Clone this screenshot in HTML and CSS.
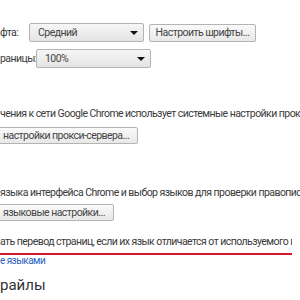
FILE: index.html
```html
<!doctype html>
<html lang="ru">
<head>
    <meta charset="utf-8">
    <title>Настройки</title>
    <link rel="stylesheet" href="styles.css">
</head>
<body>
    <div class="page">
        <!-- Шрифты -->
        <div class="row row-font">
            <span class="label">фта:</span>
            <div class="select">Средний<span class="arrow"></span></div>
            <button class="button button-fonts">Настроить шрифты...</button>
        </div>
        <div class="row row-zoom">
            <span class="label">раницы:</span>
            <div class="select">100%<span class="arrow"></span></div>
        </div>

        <!-- Сеть -->
        <p class="text text-proxy">чения к сети Google Chrome использует системные настройки прокси</p>
        <button class="button button-cut">настройки прокси-сервера...</button>

        <!-- Языки -->
        <p class="text text-lang">языка интерфейса Chrome и выбор языков для проверки правописания</p>
        <button class="button button-cut">языковые настройки...</button>

        <p class="text text-translate">ать перевод страниц, если их язык отличается от используемого в бр</p>
        <a class="link" href="#">е языками</a>

        <h3 class="section">райлы</h3>
    </div>
</body>
</html>
```

FILE: styles.css
```css
:root {
    --text-color: #3a3a3a;
    --border-color: #b4b4b4;
    --link-color: #2a62c0;
    --mark-color: #d8142c;
}

body {
    margin: 0;
    background: #fff;
    color: var(--text-color);
    font-family: Roboto, "Noto Sans", sans-serif;
    font-size: 10.5px;
    letter-spacing: -0.55px;
    overflow: hidden;
}

.page {
    width: 300px;
    overflow: hidden;
    white-space: nowrap;
}

.row {
    display: flex;
    align-items: center;
    height: 19px;
}

.row-font {
    margin-top: 23px;
}

.row-zoom {
    margin-top: 7px;
}

.label {
    width: 29px;
}

.row-zoom .label {
    width: 36px;
}

.select {
    position: relative;
    box-sizing: border-box;
    width: 115px;
    height: 19px;
    line-height: 17px;
    padding-left: 8px;
    border: 1px solid var(--border-color);
    border-radius: 2px;
    background: linear-gradient(#f6f6f6, #e4e4e4);
    color: #444;
}

.arrow {
    position: absolute;
    right: 5px;
    top: 7px;
    border-left: 4px solid transparent;
    border-right: 4px solid transparent;
    border-top: 4px solid #111;
}

.button {
    box-sizing: border-box;
    height: 18px;
    padding: 0 6px;
    border: 1px solid var(--border-color);
    border-radius: 2px;
    background: linear-gradient(#fafafa, #e8e8e8);
    color: #444;
    font-family: inherit;
    font-size: 10.5px;
    letter-spacing: -0.55px;
    line-height: 16px;
}

.button-fonts {
    margin-left: 5px;
    width: 107px;
    padding: 0;
}

.button-cut {
    display: block;
    margin-left: -3px;
    height: 17px;
    padding: 0 8px 0 5px;
}

.text {
    margin: 0;
    line-height: 14px;
}

.text-proxy {
    margin-top: 39px;
    margin-bottom: 6px;
}

.text-lang {
    margin-top: 42px;
    margin-bottom: 4px;
}

.text-translate {
    margin-top: 14px;
    padding-bottom: 4px;
    border-bottom: 2px solid var(--mark-color);
    width: 292px;
    overflow: hidden;
}

.link {
    display: block;
    color: var(--link-color);
    font-size: 10px;
    text-decoration: none;
    line-height: 11px;
}

.section {
    margin: 10px 0 0;
    font-size: 15px;
    letter-spacing: 0;
    font-weight: normal;
    color: #333;
}
```
